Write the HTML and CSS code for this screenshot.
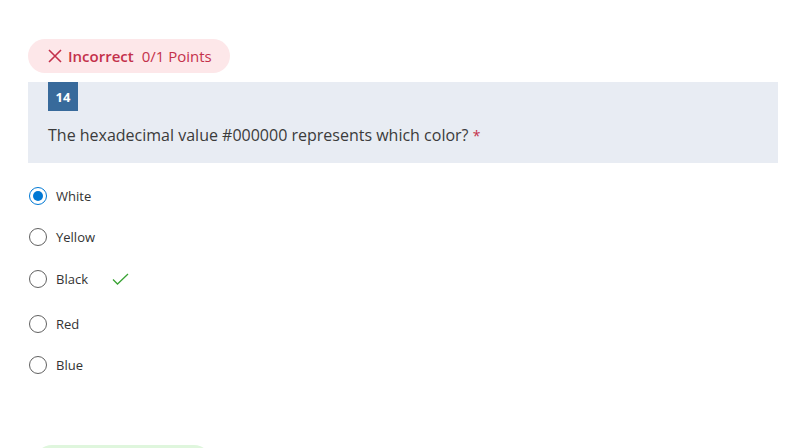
FILE: index.html
```html
<!DOCTYPE html>
<html>
<head>
<meta charset="utf-8">
<link rel="stylesheet" href="styles.css">
</head>
<body>
<div class="page">
  <div class="result">
    <svg class="x-icon" width="14" height="14" viewBox="0 0 14 14"><path d="M1 1L13 13M13 1L1 13" stroke="#c4314b" stroke-width="1.6" fill="none"/></svg>
    <span class="status">Incorrect</span>
    <span class="points">0/1 Points</span>
  </div>
  <div class="question">
    <div class="qnum">14</div>
    <div class="qtext">The hexadecimal value #000000 represents which color? <span class="req">*</span></div>
  </div>
  <div class="options">
    <div class="opt"><span class="radio checked"></span><span class="label">White</span></div>
    <div class="opt"><span class="radio"></span><span class="label">Yellow</span></div>
    <div class="opt opt-tall"><span class="radio"></span><span class="label">Black</span>
      <svg class="check" width="17" height="13" viewBox="0 0 17 13"><path d="M1 6.5L5.5 11L16 1" stroke="#3aa335" stroke-width="1.3" fill="none"/></svg>
    </div>
    <div class="opt"><span class="radio"></span><span class="label">Red</span></div>
    <div class="opt"><span class="radio"></span><span class="label">Blue</span></div>
  </div>
  <div class="next-pill"></div>
</div>
</body>
</html>
```
FILE: styles.css
```css
html, body {
  margin: 0;
  padding: 0;
  background: #ffffff;
  overflow: hidden;
  height: 448px;
}
.page {
  padding: 39px 22px 0 28px;
  font-family: "Open Sans", "Noto Sans", sans-serif;
  color: #333333;
}
.result {
  display: inline-flex;
  align-items: center;
  height: 34px;
  padding: 0 18px 0 20px;
  background: #fde7e9;
  border-radius: 17px;
  color: #c4314b;
  font-size: 15px;
  box-sizing: border-box;
}
.x-icon { margin-right: 6px; }
.status { font-weight: 600; margin-right: 8px; }
.points { font-weight: 400; }
.question {
  margin-top: 9px;
  background: #e8ecf3;
  height: 81px;
  padding: 0 20px;
  box-sizing: border-box;
}
.qnum {
  width: 30px;
  height: 29px;
  background: #386a9b;
  color: #ffffff;
  font-size: 13px;
  font-weight: 700;
  display: flex;
  align-items: center;
  justify-content: center;
}
.qtext {
  margin-top: 13px;
  font-size: 16px;
  color: #3b3b3b;
}
.req { color: #c4314b; font-size: 14px; }
.options {
  margin-top: 12px;
}
.opt {
  display: flex;
  align-items: center;
  height: 41px;
}
.opt-tall { height: 44px; margin-bottom: 2px; }
.radio {
  width: 18px;
  height: 18px;
  border: 1px solid #616161;
  border-radius: 50%;
  box-sizing: border-box;
  margin-left: 1px;
  margin-right: 9px;
  position: relative;
}
.radio.checked {
  border-color: #0078d4;
  background: #ffffff;
}
.radio.checked::after {
  content: "";
  position: absolute;
  left: 3px;
  top: 3px;
  width: 10px;
  height: 10px;
  border-radius: 50%;
  background: #0078d4;
}
.label {
  font-size: 13px;
  color: #333333;
}
.check { margin-left: 24px; }
.next-pill {
  margin-top: 60px;
  margin-left: 7px;
  width: 176px;
  height: 34px;
  background: #dff6dd;
  border-radius: 17px;
}
```
